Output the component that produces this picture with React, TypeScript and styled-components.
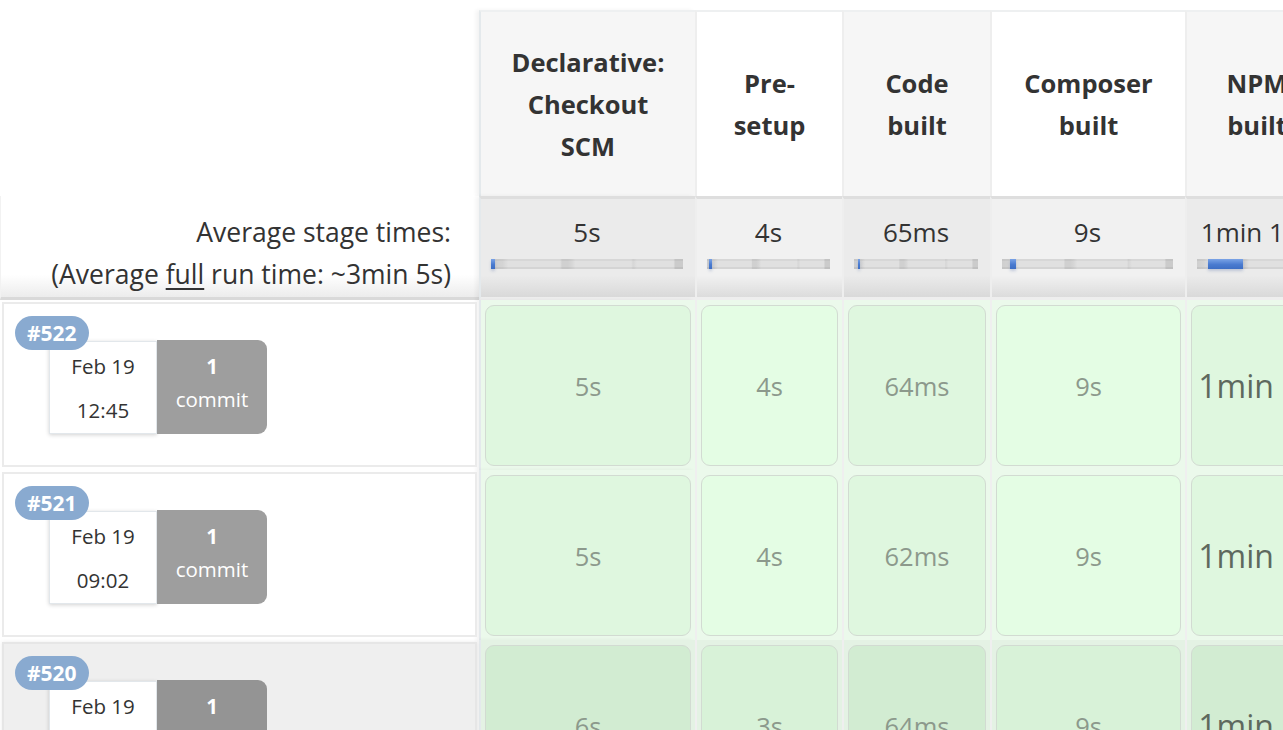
import React from "react";
import styled, { createGlobalStyle, css } from "styled-components";

const GlobalStyle = createGlobalStyle`
  html, body {
    margin: 0;
    padding: 0;
    background: #ffffff;
    overflow: hidden;
  }
  body {
    font-family: "Open Sans", "Noto Sans", sans-serif;
    color: #333333;
  }
`;

type Stage = {
  name: string;
  width: number;
  avg: string;
  barLeft: number;
  barWidth: number;
  long?: boolean;
};

const stages: Stage[] = [
  { name: "Declarative: Checkout SCM", width: 214, avg: "5s", barLeft: 0, barWidth: 4 },
  { name: "Pre-setup", width: 145, avg: "4s", barLeft: 2, barWidth: 3 },
  { name: "Code built", width: 146, avg: "65ms", barLeft: 4, barWidth: 2 },
  { name: "Composer built", width: 193, avg: "9s", barLeft: 8, barWidth: 6 },
  { name: "NPM built", width: 140, avg: "1min 11s", barLeft: 11, barWidth: 35, long: true },
];

type Build = {
  id: string;
  date: string;
  time: string;
  commits: number;
  times: string[];
  hover?: boolean;
};

const builds: Build[] = [
  { id: "#522", date: "Feb 19", time: "12:45", commits: 1, times: ["5s", "4s", "64ms", "9s", "1min 9s"] },
  { id: "#521", date: "Feb 19", time: "09:02", commits: 1, times: ["5s", "4s", "62ms", "9s", "1min 8s"] },
  { id: "#520", date: "Feb 19", time: "08:31", commits: 1, times: ["6s", "3s", "64ms", "9s", "1min 9s"], hover: true },
];

const LEFT = 479;
const columns = `${LEFT}px ${stages.map((s) => `${s.width + 2}px`).join(" ")}`;

const Board = styled.div`
  width: max-content;
`;

const Row = styled.div<{ $cols: string; $height: number }>`
  display: grid;
  grid-template-columns: ${(p) => p.$cols};
  height: ${(p) => p.$height}px;
`;

const Corner = styled.div`
  background: #ffffff;
`;

const firstColumn = css`
  border-left-color: #e4e9ec;
  box-shadow: -3px 0 4px rgba(0, 0, 0, 0.05);
`;

const StageHeader = styled.div<{ $odd: boolean; $first: boolean }>`
  margin-top: 10px;
  border-top: 2px solid #eef0f1;
  border-left: 2px solid #eeeeee;
  background: ${(p) => (p.$odd ? "#f6f6f6" : "#ffffff")};
  display: flex;
  align-items: center;
  justify-content: center;
  text-align: center;
  padding: 0 22px 1px;
  font-weight: 700;
  font-size: 25.5px;
  line-height: 42px;
  color: #333333;
  ${(p) => p.$first && firstColumn}
`;

const AvgLabel = styled.div`
  border-left: 1px solid #f2f2f2;
  border-bottom: 3px solid #d9d9d9;
  background: linear-gradient(to bottom, #ffffff 0%, #ffffff 78%, #ececec 100%);
  padding: 15px 28px 0 0;
  text-align: right;
  font-size: 26.5px;
  line-height: 42px;
  color: #333333;
  white-space: nowrap;
`;

const Underlined = styled.span`
  text-decoration: underline;
  text-underline-offset: 4px;
  text-decoration-thickness: 2px;
`;

const AvgCell = styled.div<{ $odd: boolean; $first: boolean }>`
  border-top: 3px solid #dedede;
  border-left: 2px solid #eeeeee;
  border-bottom: 3px solid #eeeeee;
  background: ${(p) =>
    p.$odd
      ? "linear-gradient(to bottom, #ebebeb 0%, #ebebeb 78%, #d9d9d9 100%)"
      : "linear-gradient(to bottom, #f1f1f1 0%, #f1f1f1 78%, #dcdcdc 100%)"};
  padding: 12px 12px 0 10px;
  text-align: center;
  font-size: 26px;
  line-height: 42px;
  color: #333333;
  white-space: nowrap;
  ${(p) => p.$first && firstColumn}
`;

const Track = styled.div`
  position: relative;
  margin-top: 6px;
  height: 10px;
  background: linear-gradient(
    to right,
    #cfcfcf 0,
    #d4d4d4 6%,
    #e0e0e0 9%,
    #e0e0e0 36%,
    #d0d0d0 37%,
    #d0d0d0 40%,
    #d6d6d6 42%,
    #e0e0e0 44%,
    #e0e0e0 73%,
    #d6d6d6 74%,
    #e0e0e0 76%,
    #e0e0e0 95%,
    #cbcbcb 96%,
    #cbcbcb 100%
  );
  box-shadow: inset 0 2px 0 rgba(0, 0, 0, 0.04), inset 0 -2px 0 rgba(0, 0, 0, 0.05);
`;

const Fill = styled.div<{ $left: number; $width: number }>`
  position: absolute;
  top: 0;
  bottom: 0;
  left: ${(p) => p.$left}px;
  width: ${(p) => p.$width}px;
  background: linear-gradient(to bottom, #7aa3e6 0%, #4a7bd0 55%, #3d6ec4 100%);
  box-shadow: 0 2px 3px rgba(60, 90, 160, 0.25);
`;

const BuildCard = styled.div<{ $hover: boolean }>`
  position: relative;
  margin: 2px 2px 3px 2px;
  border: 2px solid #ebebeb;
  background: ${(p) => (p.$hover ? "#efefef" : "#ffffff")};
  padding: 36px 0 0 45px;
  ${(p) =>
    p.$hover &&
    css`
      border-color: #e6e6e6;
      box-shadow: 0 0 4px rgba(0, 0, 0, 0.08);
    `}
`;

const Badge = styled.span`
  position: absolute;
  top: 12px;
  left: 11px;
  z-index: 2;
  height: 34px;
  padding: 0 12px;
  border-radius: 17px;
  background: #89aad0;
  color: #ffffff;
  font-size: 21px;
  font-weight: 700;
  line-height: 34px;
`;

const BuildInfo = styled.div`
  display: flex;
  align-items: flex-start;
`;

const DateBox = styled.div`
  width: 108px;
  height: 93px;
  margin-top: 1px;
  box-sizing: border-box;
  padding-top: 2px;
  background: #ffffff;
  border: 1px solid #e2e7eb;
  box-shadow: 0 1px 4px rgba(0, 0, 0, 0.18);
  text-align: center;
  font-size: 20.5px;
  line-height: 44px;
  color: #333333;
`;

const CommitBox = styled.div<{ $hover: boolean }>`
  width: 110px;
  height: 94px;
  box-sizing: border-box;
  padding-top: 10px;
  background: ${(p) => (p.$hover ? "#949494" : "#9e9e9e")};
  border-radius: 0 9px 9px 0;
  text-align: center;
  color: #ffffff;
  font-size: 20.5px;
  line-height: 33px;
`;

const CommitCount = styled.div`
  font-weight: 700;
`;

const StageCell = styled.div<{ $first: boolean; $hover: boolean }>`
  border-left: 2px solid #efefef;
  background: ${(p) => (p.$hover ? "#e4f2e4" : "#ebf9eb")};
  padding: 5px 4px 4px;
  ${(p) => p.$first && firstColumn}
`;

const StageBox = styled.div<{ $odd: boolean; $hover: boolean; $long: boolean }>`
  height: 100%;
  box-sizing: border-box;
  border: 1.5px solid #d2dbd2;
  border-radius: 9px;
  background: ${(p) =>
    p.$hover ? (p.$odd ? "#d2ecd2" : "#d8f2d8") : p.$odd ? "#dff7df" : "#e4fde4"};
  display: flex;
  align-items: center;
  justify-content: center;
  white-space: nowrap;
  overflow: hidden;
  font-size: ${(p) => (p.$long ? "32px" : "25.5px")};
  color: ${(p) => (p.$long ? "#5e695e" : "#8c998c")};
`;

export default function App() {
  return (
    <>
      <GlobalStyle />
      <Board>
        <Row $cols={columns} $height={196}>
          <Corner />
          {stages.map((s, i) => (
            <StageHeader key={s.name} $odd={i % 2 === 0} $first={i === 0}>
              {s.name}
            </StageHeader>
          ))}
        </Row>
        <Row $cols={columns} $height={104}>
          <AvgLabel>
            Average stage times:
            <br />
            (Average <Underlined>full</Underlined> run time: ~3min 5s)
          </AvgLabel>
          {stages.map((s, i) => (
            <AvgCell key={s.name} $odd={i % 2 === 0} $first={i === 0}>
              {s.avg}
              <Track>
                <Fill $left={s.barLeft} $width={s.barWidth} />
              </Track>
            </AvgCell>
          ))}
        </Row>
        {builds.map((b) => (
          <Row key={b.id} $cols={columns} $height={170}>
            <BuildCard $hover={!!b.hover}>
              <Badge>{b.id}</Badge>
              <BuildInfo>
                <DateBox>
                  <div>{b.date}</div>
                  <div>{b.time}</div>
                </DateBox>
                <CommitBox $hover={!!b.hover}>
                  <CommitCount>{b.commits}</CommitCount>
                  <div>commit</div>
                </CommitBox>
              </BuildInfo>
            </BuildCard>
            {stages.map((s, i) => (
              <StageCell key={s.name} $first={i === 0} $hover={!!b.hover}>
                <StageBox $odd={i % 2 === 0} $hover={!!b.hover} $long={!!s.long}>
                  {b.times[i]}
                </StageBox>
              </StageCell>
            ))}
          </Row>
        ))}
      </Board>
    </>
  );
}
